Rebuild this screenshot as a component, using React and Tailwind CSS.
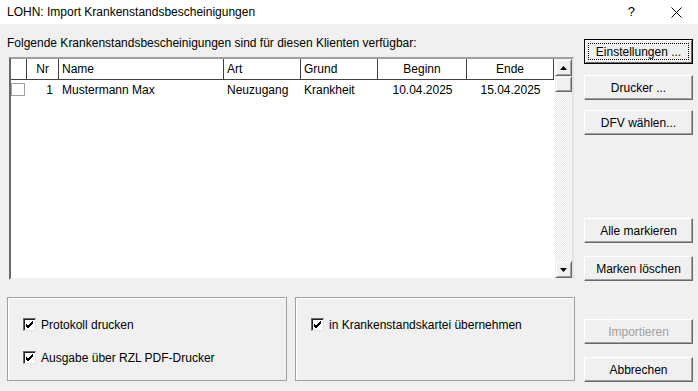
import React from 'react';

const btn3d =
  'flex h-[25px] w-[109px] items-center justify-center border border-t-white border-l-white border-b-[#696969] border-r-[#696969] bg-[#f0f0f0] shadow-[inset_-1px_-1px_0_#a0a0a0]';

const Button = ({ label, className = '', disabled }) => (
  <div className={`${btn3d} ${className} ${disabled ? 'text-[#a0a0a0]' : 'text-black'}`}>{label}</div>
);

const CheckMark = () => (
  <svg width="9" height="9" viewBox="0 0 9 9">
    <path d="M1 4 L3 6 L8 1 M1 5 L3 7 L8 2 M1 6 L3 8 L8 3" stroke="#000" strokeWidth="1" fill="none" shapeRendering="crispEdges" />
  </svg>
);

const CheckBox = ({ checked = true }) => (
  <div className="flex h-[13px] w-[13px] items-center justify-center border border-t-[#696969] border-l-[#696969] border-b-[#e3e3e3] border-r-[#e3e3e3] bg-white shadow-[inset_1px_1px_0_#222]">
    {checked && <CheckMark />}
  </div>
);

const Arrow = ({ up }) => (
  <svg width="7" height="4" viewBox="0 0 7 4">
    <path d={up ? 'M0 4 L3.5 0 L7 4 Z' : 'M0 0 L3.5 4 L7 0 Z'} fill="#000" />
  </svg>
);

const headCell = 'flex h-[21px] items-center border-r border-b border-r-[#404040] border-b-[#404040] shadow-[inset_1px_0_0_#fff]';

export default function App() {
  return (
    <div className="flex h-[391px] w-[698px] flex-col bg-[#f0f0f0] font-['Liberation_Sans',Arial,sans-serif] text-[12px] text-black">
      {/* title bar */}
      <div className="flex h-[24px] items-center bg-white pl-[7px]">
        <span className="flex-1">LOHN: Import Krankenstandsbescheinigungen</span>
        <span className="mr-[36px] text-[13px]">?</span>
        <svg width="11" height="11" viewBox="0 0 11 11" className="mr-[16px]">
          <path d="M0.5 0.5 L10.5 10.5 M10.5 0.5 L0.5 10.5" stroke="#000" strokeWidth="1" />
        </svg>
      </div>

      <div className="flex flex-1">
        {/* left column */}
        <div className="flex w-[575px] flex-col pl-[7px] pt-[12px]">
          <div className="h-[14px] leading-[14px]">Folgende Krankenstandsbescheinigungen sind für diesen Klienten verfügbar:</div>

          {/* list box */}
          <div className="ml-[2px] mt-[7px] flex h-[223px] w-[565px] border-2 border-t-[#a0a0a0] border-l-[#696969] border-b-[#f0f0f0] border-r-[#e3e3e3] bg-white">
            <div className="flex flex-1 flex-col">
              <div className="grid grid-cols-[16px_32px_165px_77px_77px_89px_87px]">
                <div className={headCell}></div>
                <div className={`${headCell} justify-end pr-[9px]`}>Nr</div>
                <div className={`${headCell} pl-[3px]`}>Name</div>
                <div className={`${headCell} pl-[3px]`}>Art</div>
                <div className={`${headCell} pl-[3px]`}>Grund</div>
                <div className={`${headCell} justify-center`}>Beginn</div>
                <div className={`${headCell} justify-center`}>Ende</div>
              </div>
              <div className="grid h-[19px] grid-cols-[16px_32px_165px_77px_77px_89px_87px] items-center">
                <div className="flex">
                  <div className="h-[13px] w-[14px] border border-[#a0a0a0] bg-white"></div>
                </div>
                <div className="pr-[6px] text-right">1</div>
                <div className="pl-[3px]">Mustermann Max</div>
                <div className="pl-[3px]">Neuzugang</div>
                <div className="pl-[3px]">Krankheit</div>
                <div className="text-center">10.04.2025</div>
                <div className="text-center">15.04.2025</div>
              </div>
            </div>

            {/* scrollbar */}
            <div className="ml-[1px] flex w-[17px] flex-col">
              <div className={`flex h-[17px] items-center justify-center border border-t-[#f0f0f0] border-l-[#f0f0f0] border-b-[#696969] border-r-[#696969] bg-[#f0f0f0] shadow-[inset_1px_1px_0_#fff,inset_-1px_-1px_0_#a0a0a0]`}>
                <Arrow up />
              </div>
              <div className="h-[16px] border border-t-[#f0f0f0] border-l-[#f0f0f0] border-b-[#696969] border-r-[#696969] bg-[#f0f0f0] shadow-[inset_1px_1px_0_#fff,inset_-1px_-1px_0_#a0a0a0]"></div>
              <div className="flex-1 bg-[repeating-conic-gradient(#ffffff_0_25%,#e6e6e6_0_50%)] bg-[length:2px_2px]"></div>
              <div className="flex h-[17px] items-center justify-center border border-t-[#f0f0f0] border-l-[#f0f0f0] border-b-[#696969] border-r-[#696969] bg-[#f0f0f0] shadow-[inset_1px_1px_0_#fff,inset_-1px_-1px_0_#a0a0a0]">
                <Arrow />
              </div>
            </div>
          </div>

          {/* group boxes */}
          <div className="mt-[17px] flex gap-[8px]">
            <div className="flex h-[84px] w-[280px] flex-col border border-[#a0a0a0] pl-[15px] pt-[20px] shadow-[inset_1px_1px_0_#fff]">
              <div className="flex h-[13px] items-center">
                <CheckBox />
                <span className="ml-[5px]">Protokoll drucken</span>
              </div>
              <div className="mt-[20px] flex h-[13px] items-center">
                <CheckBox />
                <span className="ml-[5px]">Ausgabe über RZL PDF-Drucker</span>
              </div>
            </div>
            <div className="flex h-[84px] w-[280px] flex-col border border-[#a0a0a0] pl-[15px] pt-[20px] shadow-[inset_1px_1px_0_#fff]">
              <div className="flex h-[13px] items-center">
                <CheckBox />
                <span className="ml-[5px]">in Krankenstandskartei übernehmen</span>
              </div>
            </div>
          </div>
        </div>

        {/* right column */}
        <div className="flex flex-col pl-[9px]">
          <div className="mt-[15px] flex h-[25px] w-[109px] border border-black bg-[#f0f0f0]">
            <div className="flex flex-1 items-center justify-center border border-t-white border-l-white border-b-[#696969] border-r-[#696969] p-[2px]">
              <div className="flex h-full w-full items-center justify-center border border-dotted border-black">Einstellungen ...</div>
            </div>
          </div>
          <Button label="Drucker ..." className="mt-[11px]" />
          <Button label="DFV wählen..." className="mt-[10px]" />
          <Button label="Alle markieren" className="mt-[83px]" />
          <Button label="Marken löschen" className="mt-[13px]" />
          <Button label="Importieren" className="mt-[38px]" disabled />
          <Button label="Abbrechen" className="mt-[13px]" />
        </div>
      </div>
    </div>
  );
}
